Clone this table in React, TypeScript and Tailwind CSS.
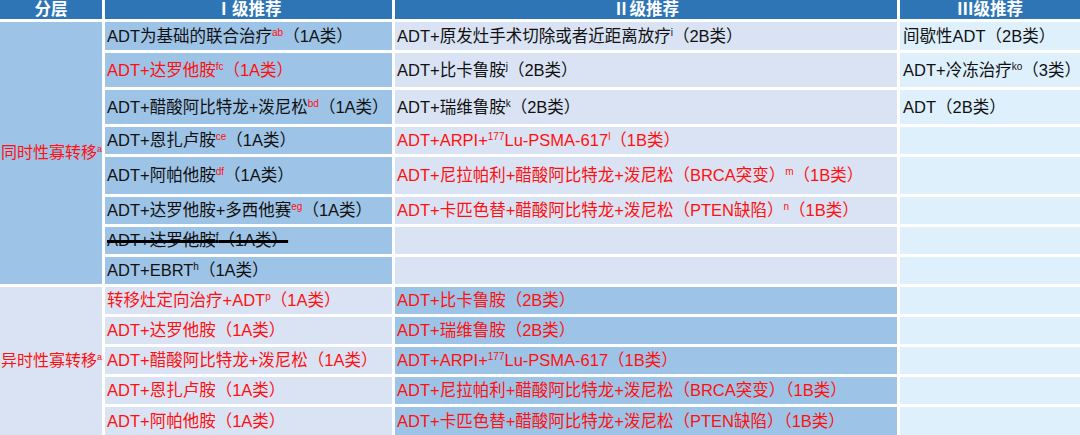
import React from 'react'

type Part = { t: string; sup?: boolean; red?: boolean }
type Cell = { parts: Part[]; red?: boolean; strike?: boolean } | null

const FONT = "font-['Liberation_Sans','Noto_Sans_CJK_SC',sans-serif]"

const BLUE = 'bg-[#9dc3e6]'
const LAV = 'bg-[#dae3f3]'
const LIGHT = 'bg-[#def0fc]'

const p = (t: string): Part => ({ t })
const s = (t: string, red = false): Part => ({ t, sup: true, red })

// rows of the upper block: [col2, col3, col4]
const upper: { h: string; cells: Cell[] }[] = [
  {
    h: 'h-[28px]',
    cells: [
      { parts: [p('ADT为基础的联合治疗'), s('ab', true), p('（1A类）')] },
      { parts: [p('ADT+原发灶手术切除或者近距离放疗'), s('i'), p('（2B类）')] },
      { parts: [p('间歇性ADT（2B类）')] },
    ],
  },
  {
    h: 'h-[34px]',
    cells: [
      { red: true, parts: [p('ADT+达罗他胺'), s('fc'), p('（1A类）')] },
      { parts: [p('ADT+比卡鲁胺'), s('j'), p('（2B类）')] },
      { parts: [p('ADT+冷冻治疗'), s('ko'), p('（3类）')] },
    ],
  },
  {
    h: 'h-[34px]',
    cells: [
      { parts: [p('ADT+醋酸阿比特龙+泼尼松'), s('bd', true), p('（1A类）')] },
      { parts: [p('ADT+瑞维鲁胺'), s('k'), p('（2B类）')] },
      { parts: [p('ADT（2B类）')] },
    ],
  },
  {
    h: 'h-[27px]',
    cells: [
      { parts: [p('ADT+恩扎卢胺'), s('ce', true), p('（1A类）')] },
      { red: true, parts: [p('ADT+ARPI+'), s('177'), p('Lu-PSMA-617'), s('l'), p('（1B类）')] },
      null,
    ],
  },
  {
    h: 'h-[37px]',
    cells: [
      { parts: [p('ADT+阿帕他胺'), s('df', true), p('（1A类）')] },
      { red: true, parts: [p('ADT+尼拉帕利+醋酸阿比特龙+泼尼松（BRCA突变）'), s('m'), p('（1B类）')] },
      null,
    ],
  },
  {
    h: 'h-[27px]',
    cells: [
      { parts: [p('ADT+达罗他胺+多西他赛'), s('eg', true), p('（1A类）')] },
      { red: true, parts: [p('ADT+卡匹色替+醋酸阿比特龙+泼尼松（PTEN缺陷）'), s('n'), p('（1B类）')] },
      null,
    ],
  },
  {
    h: 'h-[27px]',
    cells: [{ strike: true, parts: [p('ADT+达罗他胺'), s('f'), p('（1A类）')] }, null, null],
  },
  {
    h: 'h-[27px]',
    cells: [{ parts: [p('ADT+EBRT'), s('h'), p('（1A类）')] }, null, null],
  },
]

const lower: { h: string; cells: Cell[] }[] = [
  {
    h: 'h-[27px]',
    cells: [
      { red: true, parts: [p('转移灶定向治疗+ADT'), s('p'), p('（1A类）')] },
      { red: true, parts: [p('ADT+比卡鲁胺（2B类）')] },
      null,
    ],
  },
  {
    h: 'h-[27px]',
    cells: [
      { red: true, parts: [p('ADT+达罗他胺（1A类）')] },
      { red: true, parts: [p('ADT+瑞维鲁胺（2B类）')] },
      null,
    ],
  },
  {
    h: 'h-[27px]',
    cells: [
      { red: true, parts: [p('ADT+醋酸阿比特龙+泼尼松（1A类）')] },
      { red: true, parts: [p('ADT+ARPI+'), s('177'), p('Lu-PSMA-617（1B类）')] },
      null,
    ],
  },
  {
    h: 'h-[27px]',
    cells: [
      { red: true, parts: [p('ADT+恩扎卢胺（1A类）')] },
      { red: true, parts: [p('ADT+尼拉帕利+醋酸阿比特龙+泼尼松（BRCA突变）（1B类）')] },
      null,
    ],
  },
  {
    h: 'h-[28px]',
    cells: [
      { red: true, parts: [p('ADT+阿帕他胺（1A类）')] },
      { red: true, parts: [p('ADT+卡匹色替+醋酸阿比特龙+泼尼松（PTEN缺陷）（1B类）')] },
      null,
    ],
  },
]

function Text({ cell }: { cell: Cell }) {
  if (!cell) return null
  return (
    <span
      className={
        (cell.red ? 'text-[#ff1010]' : 'text-[#111]') +
        (cell.strike ? ' line-through decoration-[2.5px] decoration-black pr-[10px]' : '')
      }
    >
      {cell.parts.map((part, i) =>
        part.sup ? (
          <sup
            key={i}
            className={'text-[10px] top-[-6px] ' + (part.red ? 'text-[#ff1010]' : '')}
          >
            {part.t}
          </sup>
        ) : (
          <span key={i}>{part.t}</span>
        )
      )}
    </span>
  )
}

function Block({
  label,
  rows,
  colors,
}: {
  label: string
  rows: { h: string; cells: Cell[] }[]
  colors: [string, string, string, string]
}) {
  return (
    <div className="flex gap-[3px]">
      <div className={`w-[102px] shrink-0 flex items-center justify-end ${colors[0]}`}>
        <span className="text-[16px] text-[#ff1010] whitespace-nowrap">
          {label}
          <sup className="text-[9px] top-[-6px]">a</sup>
        </span>
      </div>
      <div className="flex-1 flex flex-col gap-[3px]">
        {rows.map((row, ri) => (
          <div key={ri} className={`flex gap-[3px] ${row.h}`}>
            <div className={`w-[287px] shrink-0 flex items-center pl-[2px] whitespace-nowrap ${colors[1]}`}>
              <Text cell={row.cells[0]} />
            </div>
            <div className={`w-[502px] shrink-0 flex items-center pl-[2px] whitespace-nowrap ${colors[2]}`}>
              <Text cell={row.cells[1]} />
            </div>
            <div className={`flex-1 flex items-center pl-[3px] whitespace-nowrap overflow-hidden ${colors[3]}`}>
              <Text cell={row.cells[2]} />
            </div>
          </div>
        ))}
      </div>
    </div>
  )
}

export default function App() {
  return (
    <div className={`w-[1080px] h-[435px] bg-white overflow-hidden flex flex-col gap-[3px] text-[16.5px] leading-none ${FONT}`}>
      <div className="h-[19px] flex gap-[3px] text-white font-bold text-[16.5px]">
        <div className="w-[102px] bg-[#2e75b6] flex items-center justify-center">分层</div>
        <div className="w-[287px] bg-[#2e75b6] flex items-center justify-center">Ⅰ级推荐</div>
        <div className="w-[502px] bg-[#2e75b6] flex items-center justify-center">Ⅱ级推荐</div>
        <div className="flex-1 bg-[#2e75b6] flex items-center justify-center">Ⅲ级推荐</div>
      </div>
      <Block label="同时性寡转移" rows={upper} colors={[BLUE, BLUE, LAV, LIGHT]} />
      <Block label="异时性寡转移" rows={lower} colors={[LAV, LAV, BLUE, LIGHT]} />
    </div>
  )
}
